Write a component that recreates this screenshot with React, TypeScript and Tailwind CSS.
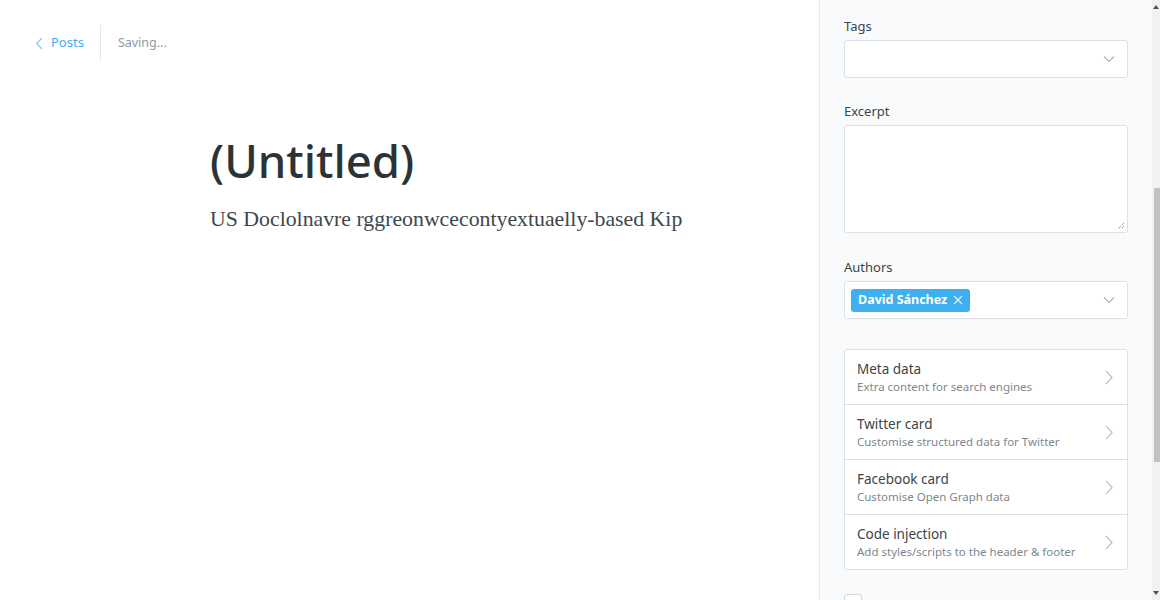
import React from "react";

const sans = { fontFamily: '"Noto Sans", "Open Sans", sans-serif' };

function ChevronDown() {
  return (
    <svg width="12" height="8" viewBox="0 0 12 8" fill="none" stroke="#aab4b9" strokeWidth="1.1">
      <path d="M1 1.5l5 5 5-5" />
    </svg>
  );
}

function ChevronRight() {
  return (
    <svg width="8" height="15" viewBox="0 0 8 15" fill="none" stroke="#a9b3b8" strokeWidth="1.1">
      <path d="M1 1l6 6.5L1 14" />
    </svg>
  );
}

const cards = [
  { title: "Meta data", sub: "Extra content for search engines" },
  { title: "Twitter card", sub: "Customise structured data for Twitter" },
  { title: "Facebook card", sub: "Customise Open Graph data" },
  { title: "Code injection", sub: "Add styles/scripts to the header & footer" },
];

export default function App() {
  return (
    <div className="flex h-[600px] w-[1160px] overflow-hidden bg-white" style={sans}>
      <main className="flex w-[819px] flex-col">
        <header className="flex h-[86px] items-center pl-[35px]">
          <div className="flex items-center gap-[8px] text-[13px] text-[#3eb0ef]">
            <svg width="8" height="13" viewBox="0 0 8 13" fill="none" stroke="#7fcaf3" strokeWidth="1.1">
              <path d="M7 1L1.5 6.5 7 12" />
            </svg>
            <span>Posts</span>
          </div>
          <div className="ml-[16px] mr-[17px] h-[36px] w-px bg-[#e3eaee]" />
          <span className="text-[12.5px] text-[#8e9ba2]">Saving...</span>
        </header>
        <div className="pl-[210px] pt-[44px]">
          <h1 className="text-[45.5px] font-medium leading-[60px] text-[#2b3337]">(Untitled)</h1>
          <p
            className="mt-[14px] text-[21.8px] leading-[30px] text-[#3c484e]"
            style={{ fontFamily: '"Liberation Serif", serif' }}
          >
            US Doclolnavre rggreonwcecontyextuaelly-based Kip
          </p>
        </div>
      </main>

      <aside className="flex h-[600px] w-[341px] shrink-0 border-l border-[#e3eaee] bg-[#f8fafb]">
        <div className="w-[333px] px-[24px] pt-[17px]">
          <label className="block text-[13px] leading-[18px] text-[#3b4448]">Tags</label>
          <div className="mt-[5px] flex h-[38px] items-center justify-end rounded-[3px] border border-[#dae2e7] bg-white pr-[12px]">
            <ChevronDown />
          </div>

          <label className="mt-[24px] block text-[13px] leading-[18px] text-[#3b4448]">Excerpt</label>
          <div className="relative mt-[5px] h-[108px] rounded-[3px] border border-[#dae2e7] bg-white">
            <svg className="absolute bottom-[2px] right-[2px]" width="8" height="8" viewBox="0 0 8 8" stroke="#6b6b6b" strokeWidth="1" strokeDasharray="1 1">
              <path d="M7 1L1 7M7 4L4 7" />
            </svg>
          </div>

          <label className="mt-[25px] block text-[13px] leading-[18px] text-[#3b4448]">Authors</label>
          <div className="mt-[5px] flex h-[38px] items-center justify-between rounded-[3px] border border-[#dae2e7] bg-white pl-[6px] pr-[12px]">
            <span className="flex h-[23px] items-center gap-[6px] rounded-[3px] bg-[#3eb0ef] px-[7px] text-[12.5px] font-bold text-white">
              David Sánchez
              <svg width="10" height="10" viewBox="0 0 10 10" stroke="#dff1fc" strokeWidth="1.1">
                <path d="M1 1l8 8M9 1L1 9" />
              </svg>
            </span>
            <ChevronDown />
          </div>

          <ul className="mt-[30px] rounded-[3px] border border-[#dae2e7] bg-white">
            {cards.map((c, i) => (
              <li
                key={c.title}
                className={
                  "flex items-center justify-between pl-[12px] pr-[14px] " +
                  (i > 0 ? "h-[55px] border-t border-[#dae2e7]" : "h-[54px]")
                }
              >
                <div className="flex flex-col">
                  <span className="text-[13.5px] leading-[18px] text-[#3b4448]">{c.title}</span>
                  <span className="text-[11.5px] leading-[17px] text-[#7d878c]">{c.sub}</span>
                </div>
                <ChevronRight />
              </li>
            ))}
          </ul>

          <div className="mt-[24px] flex items-center gap-[10px]">
            <span className="h-[18px] w-[18px] shrink-0 rounded-[3px] border border-[#cfd8dd] bg-white" />
          </div>
        </div>

        <div className="flex w-[8px] flex-col items-center bg-[#f1f1f1]">
          <svg className="mt-[5px]" width="6" height="4" viewBox="0 0 6 4" fill="#505050">
            <path d="M3 0L6 4H0z" />
          </svg>
          <div className="mt-[179px] ml-[2px] h-[274px] w-[6px] bg-[#c1c1c1]" />
          <div className="flex-1" />
          <svg className="mb-[5px]" width="6" height="4" viewBox="0 0 6 4" fill="#505050">
            <path d="M0 0h6L3 4z" />
          </svg>
        </div>
      </aside>
    </div>
  );
}
